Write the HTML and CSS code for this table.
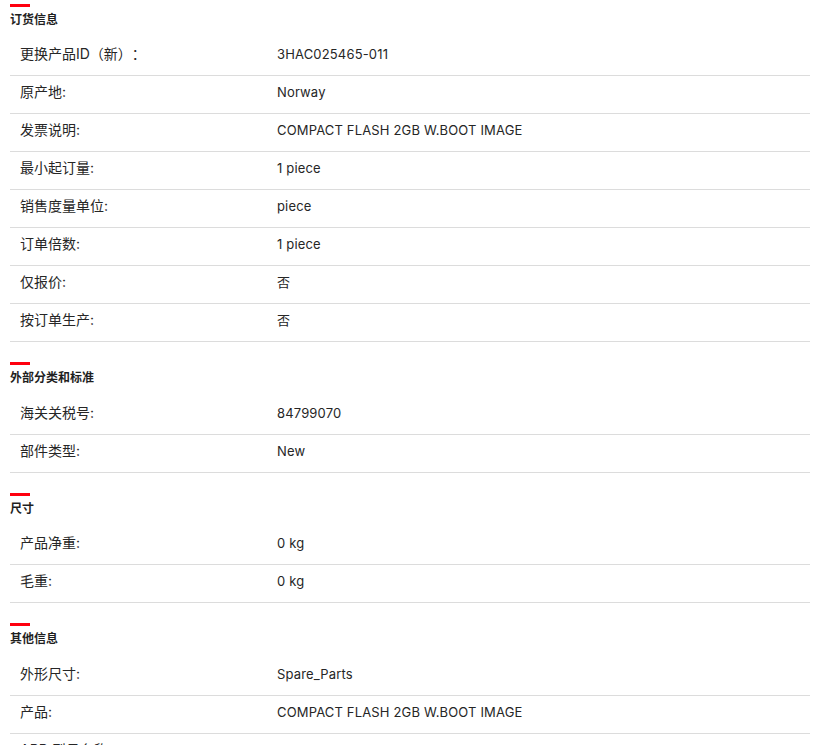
FILE: index.html
```html
<!DOCTYPE html>
<html lang="zh-CN">
<head>
<meta charset="utf-8">
<title>产品详情</title>
<link rel="stylesheet" href="styles.css">
</head>
<body>
<div class="page">
  <section class="group">
    <div class="bar"></div>
    <h3 class="title">订货信息</h3>
    <div class="rows">
      <div class="row"><div class="label">更换产品ID（新）：</div><div class="value">3HAC025465-011</div></div>
      <div class="row"><div class="label">原产地:</div><div class="value">Norway</div></div>
      <div class="row"><div class="label">发票说明:</div><div class="value">COMPACT FLASH 2GB W.BOOT IMAGE</div></div>
      <div class="row"><div class="label">最小起订量:</div><div class="value">1 piece</div></div>
      <div class="row"><div class="label">销售度量单位:</div><div class="value">piece</div></div>
      <div class="row"><div class="label">订单倍数:</div><div class="value">1 piece</div></div>
      <div class="row"><div class="label">仅报价:</div><div class="value">否</div></div>
      <div class="row"><div class="label">按订单生产:</div><div class="value">否</div></div>
    </div>
  </section>
  <section class="group">
    <div class="bar"></div>
    <h3 class="title">外部分类和标准</h3>
    <div class="rows">
      <div class="row"><div class="label">海关关税号:</div><div class="value">84799070</div></div>
      <div class="row"><div class="label">部件类型:</div><div class="value">New</div></div>
    </div>
  </section>
  <section class="group">
    <div class="bar"></div>
    <h3 class="title">尺寸</h3>
    <div class="rows">
      <div class="row"><div class="label">产品净重:</div><div class="value">0 kg</div></div>
      <div class="row"><div class="label">毛重:</div><div class="value">0 kg</div></div>
    </div>
  </section>
  <section class="group">
    <div class="bar"></div>
    <h3 class="title">其他信息</h3>
    <div class="rows">
      <div class="row"><div class="label">外形尺寸:</div><div class="value">Spare_Parts</div></div>
      <div class="row"><div class="label">产品:</div><div class="value">COMPACT FLASH 2GB W.BOOT IMAGE</div></div>
      <div class="row"><div class="label">ABB 型号名称:</div><div class="value">3HAC025465-011</div></div>
    </div>
  </section>
</div>
</body>
</html>
```
FILE: styles.css
```css
html, body {
  margin: 0;
  padding: 0;
  background: #ffffff;
}
body {
  font-family: Inter, "Noto Sans CJK SC", sans-serif;
  color: #262626;
  overflow: hidden;
}
.page {
  width: 800px;
  margin-left: 10px;
  padding-top: 4px;
}
.group + .group {
  margin-top: 20px;
}
.bar {
  width: 20px;
  height: 3px;
  background: #ff000f;
}
.title {
  margin: 4px 0 0;
  font-size: 12px;
  line-height: 18px;
  font-weight: 700;
  color: #1f1f1f;
  font-family: Inter, "Noto Sans CJK SC", sans-serif;
}
.rows {
  margin-top: 9px;
}
.group + .group .rows {
  margin-top: 9.67px;
}
.row {
  display: grid;
  grid-template-columns: 257px 1fr;
  padding: 8px 0 13px 10px;
  line-height: 16px;
  font-size: 13px;
  border-bottom: 1px solid #dcdcdc;
}
.label {
  font-size: 14px;
  color: #262626;
  text-spacing-trim: space-all;
}
.value {
  letter-spacing: 0.16px;
  color: #262626;
}
```
